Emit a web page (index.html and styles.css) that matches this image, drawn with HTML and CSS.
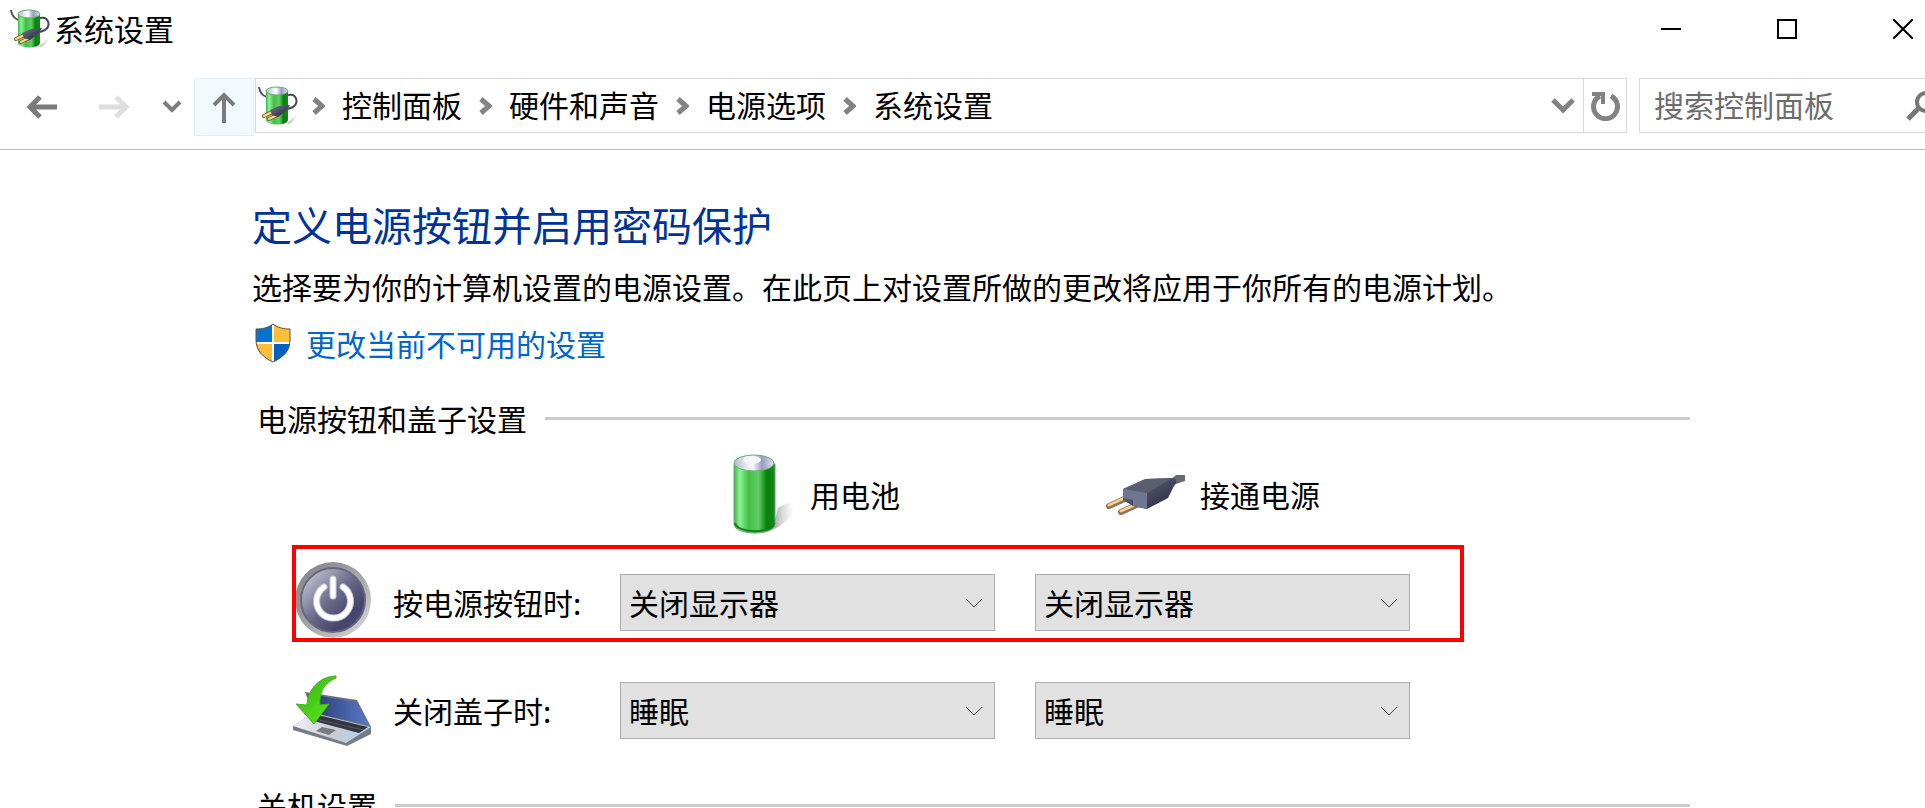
FILE: index.html
```
<!doctype html>
<html lang="zh-CN">
<head>
<meta charset="utf-8">
<title>系统设置</title>
<meta name="viewport" content="width=device-width, initial-scale=1">
<link rel="stylesheet" href="styles.css">
</head>
<body>

<!-- shared icons -->
<svg class="defs" aria-hidden="true">
  <defs>
    <linearGradient id="green">
      <stop offset="0" stop-color="#3db548"/>
      <stop offset=".14" stop-color="#8af590"/>
      <stop offset=".36" stop-color="#45bd4a"/>
      <stop offset=".6" stop-color="#5fce62"/>
      <stop offset=".8" stop-color="#087f0c"/>
      <stop offset="1" stop-color="#17891d"/>
    </linearGradient>
    <linearGradient id="cap">
      <stop offset="0" stop-color="#b4b8cd"/>
      <stop offset=".45" stop-color="#fff"/>
      <stop offset=".7" stop-color="#9a9dbd"/>
      <stop offset="1" stop-color="#e2e4f0"/>
    </linearGradient>
    <linearGradient id="shadow">
      <stop offset="0" stop-color="#777" stop-opacity=".7"/>
      <stop offset="1" stop-color="#bbb" stop-opacity="0"/>
    </linearGradient>
    <linearGradient id="plug" x1="0" y1="0" x2="1" y2="1">
      <stop offset="0" stop-color="#7b7d90"/>
      <stop offset=".5" stop-color="#474961"/>
      <stop offset="1" stop-color="#25263d"/>
    </linearGradient>
    <linearGradient id="ring" x1="0" y1="0" x2="1" y2="1">
      <stop offset="0" stop-color="#7e7f84"/>
      <stop offset=".5" stop-color="#a4a4a8"/>
      <stop offset="1" stop-color="#dcdcdc"/>
    </linearGradient>
    <linearGradient id="knob" x1="0" y1="0" x2="1" y2="1">
      <stop offset=".1" stop-color="#c2c2d0"/>
      <stop offset=".48" stop-color="#6a6a8a"/>
      <stop offset=".75" stop-color="#45446a"/>
      <stop offset="1" stop-color="#55547c"/>
    </linearGradient>
    <linearGradient id="screen">
      <stop offset="0" stop-color="#26356e"/>
      <stop offset="1" stop-color="#5a7bc8"/>
    </linearGradient>
    <linearGradient id="deck">
      <stop offset="0" stop-color="#f4f4f8"/>
      <stop offset=".5" stop-color="#c9cbd3"/>
      <stop offset="1" stop-color="#a9d4ee"/>
    </linearGradient>
    <linearGradient id="arrow" x1="0" y1="0" x2="1" y2="1">
      <stop offset="0" stop-color="#2fae12"/>
      <stop offset="1" stop-color="#63ee1c"/>
    </linearGradient>
  </defs>
  <symbol id="power-icon" viewBox="0 0 40 40">
    <path d="M29 38 39 27q1 6-6 10z" fill="url(#shadow)"/>
    <path d="M1 1q1 8 8 10" fill="none" stroke="#50526e" stroke-width="2"/>
    <path d="M8 5v29c0 6 22 6 22 0V5z" fill="url(#green)"/>
    <ellipse cx="19" cy="5" rx="11" ry="4" fill="url(#cap)" stroke="#5dad70"/>
    <path d="M30 9c9-2 11 8 5 12l-5 2" fill="none" stroke="#46475f" stroke-width="2"/>
    <path d="m6 30 8-4M11 33l8-4" stroke="#8b5a26" stroke-width="4" stroke-linecap="round"/>
    <path d="m6 30 8-4M11 33l8-4" stroke="#ffd49a" stroke-width="2" stroke-linecap="round"/>
    <path d="m12 24 9-4 11-1-3 5-9 7-6-2z" fill="url(#plug)"/>
  </symbol>
  <symbol id="crumb" viewBox="0 0 13 18">
    <path d="m2 2 8 7-8 7" fill="none" stroke="#838383" stroke-width="5"/>
  </symbol>
  <symbol id="drop" viewBox="0 0 18 10">
    <path d="m1 1 8 8 8-8" fill="none" stroke="#444"/>
  </symbol>
</svg>

<div class="window">
  <header class="titlebar">
    <svg class="app-icon"><use href="#power-icon"/></svg>
    <span class="caption">系统设置</span>
    <button class="win-btn" aria-label="最小化"><svg width="20" height="20"><path d="M0 10h20" stroke="#000" stroke-width="2"/></svg></button>
    <button class="win-btn" aria-label="最大化"><svg width="20" height="20"><path d="M1 1h18v18H1z" fill="none" stroke="#000" stroke-width="2"/></svg></button>
    <button class="win-btn close" aria-label="关闭"><svg width="20" height="20"><path d="m0 0 20 20M20 0 0 20" stroke="#000" stroke-width="2"/></svg></button>
  </header>

  <nav class="toolbar">
    <button class="nav-btn" aria-label="后退"><svg width="30" height="24"><path d="M30 12H3M13 2 3 12l10 10" fill="none" stroke="#7b7b7b" stroke-width="5"/></svg></button>
    <button class="nav-btn" aria-label="前进" disabled><svg width="30" height="24"><path d="M0 12h27M17 2l10 10-10 10" fill="none" stroke="#dedede" stroke-width="5"/></svg></button>
    <button class="nav-btn recent" aria-label="最近浏览的位置"><svg width="20" height="14"><path d="m2 2 8 8 8-8" fill="none" stroke="#7b7b7b" stroke-width="4"/></svg></button>
    <button class="nav-btn up" aria-label="上移"><svg width="24" height="32"><path d="M12 32V4M2 14 12 4l10 10" fill="none" stroke="#7b7b7b" stroke-width="4"/></svg></button>

    <div class="address">
      <svg class="app-icon"><use href="#power-icon"/></svg>
      <svg class="sep"><use href="#crumb"/></svg>
      <a href="#">控制面板</a>
      <svg class="sep"><use href="#crumb"/></svg>
      <a href="#">硬件和声音</a>
      <svg class="sep"><use href="#crumb"/></svg>
      <a href="#">电源选项</a>
      <svg class="sep"><use href="#crumb"/></svg>
      <a href="#">系统设置</a>
      <button class="history" aria-label="以前的位置"><svg width="24" height="16"><path d="m2 2 10 10L22 2" fill="none" stroke="#838383" stroke-width="5"/></svg></button>
      <button class="refresh" aria-label="刷新"><svg width="30" height="30" fill="none" stroke="#838383"><path d="M21 5a12 12 0 1 1-11 0" stroke-width="5"/><path d="M2 3h11v10" stroke-width="4"/></svg></button>
    </div>

    <div class="search">
      <input type="text" placeholder="搜索控制面板" aria-label="搜索控制面板">
      <svg width="32" height="30" fill="none" stroke="#777"><circle cx="20" cy="11" r="9" stroke-width="4"/><path d="M13 17 2 28" stroke-width="5"/></svg>
    </div>
  </nav>

  <main>
    <h1>定义电源按钮并启用密码保护</h1>
    <p>选择要为你的计算机设置的电源设置。在此页上对设置所做的更改将应用于你所有的电源计划。</p>
    <a class="elevate" href="#">
      <svg width="38" height="40" viewBox="0 0 38 40">
        <path d="M19 1C14 5 8 6 2 6v13h17z" fill="#0872cf"/>
        <path d="M19 1c5 4 11 5 17 5v13H19z" fill="#ffbd38"/>
        <path d="M2 19c0 10 8 16 17 20V19z" fill="#ffbd38"/>
        <path d="M36 19c0 10-8 16-17 20V19z" fill="#0560c4"/>
        <path d="M19 1v38M2 20h34" stroke="#fff" stroke-width="2"/>
        <path d="M19 1C14 5 8 6 2 6v11c0 11 8 18 17 22 9-4 17-11 17-22V6c-6 0-12-1-17-5z" fill="none" stroke="#555"/>
      </svg>
      更改当前不可用的设置
    </a>

    <section>
      <h2>电源按钮和盖子设置</h2>

      <div class="row">
        <div class="source battery">
          <svg width="80" height="80" viewBox="0 0 80 80">
            <path d="M56 76 62 54q10-7 16-3 1 9-9 17-6 5-13 8z" fill="url(#shadow)"/>
            <path d="M18 10v60c0 12 41 12 41 0V10z" fill="url(#green)" stroke="#67a96c"/>
            <path d="M19 69c3 11 36 11 39 0" fill="none" stroke="#197b20" stroke-width="2"/>
            <ellipse cx="38" cy="9" rx="20" ry="8" fill="url(#cap)" stroke="#62b56a"/>
            <ellipse cx="36" cy="6" rx="9" ry="4" fill="#f5f6fa"/>
          </svg>
          用电池
        </div>
        <div class="source mains">
          <svg width="80" height="80" viewBox="0 0 80 80">
            <path d="m3 52 20-9M15 58l20-9" stroke="#95704a" stroke-width="6" stroke-linecap="round"/>
            <path d="m3 51 20-9M15 57l20-9" stroke="#f1cf9f" stroke-width="3" stroke-linecap="round"/>
            <path d="m64 26 6-5h9v6l-9 3z" fill="#686c70"/>
            <path d="m17 35 24-10 27-1q5 3 0 8l-6 12-21 11-14-3-10-6z" fill="url(#plug)"/>
            <path d="m17 35 22-10 27-1-25 15z" fill="#5b5d70"/>
            <path d="m17 35 24 4v16l-14-3v-6l-10-2z" fill="#707590"/>
          </svg>
          接通电源
        </div>
      </div>

      <div class="row marked">
        <svg width="80" height="80" viewBox="0 0 80 80">
          <circle cx="40" cy="38" r="38" fill="url(#ring)"/>
          <circle cx="40" cy="38" r="32" fill="url(#knob)" stroke="#66677f" stroke-width="2"/>
          <path d="M31 25a17 17 0 1 0 19 0M40 17v17" fill="none" stroke="#c5c5df" stroke-width="7" stroke-linecap="round"/>
          <path d="M31 25a17 17 0 1 0 19 0M40 17v17" fill="none" stroke="#fff" stroke-width="5" stroke-linecap="round"/>
        </svg>
        <span class="label" id="press">按电源按钮时:</span>
        <div class="select">
          <select aria-labelledby="press"><option>关闭显示器</option></select>
          <svg><use href="#drop"/></svg>
        </div>
        <div class="select">
          <select aria-labelledby="press"><option>关闭显示器</option></select>
          <svg><use href="#drop"/></svg>
        </div>
      </div>

      <div class="row">
        <svg width="80" height="80" viewBox="0 0 80 80">
          <path d="m12 22 52 8 14 27-57-12z" fill="#6c6e7c"/>
          <path d="m15 24 48 8 13 23-52-11z" fill="url(#screen)"/>
          <path d="m20 43 58 13v8L54 76 0 60v-4z" fill="#777b83"/>
          <path d="m20 43 58 14-25 16L0 56z" fill="url(#deck)"/>
          <path d="m25 45 50 12-9 6-49-13z" fill="#34353f"/>
          <path d="m22 49 48 11" stroke="#555763"/>
          <path d="m29 57 14 3-7 5-13-4z" fill="#777a80"/>
          <path d="M43 6C28 6 15 18 14 35L3 34l18 20 15-20-9 1C26 22 31 13 43 8z" fill="url(#arrow)" stroke="#4cae27"/>
        </svg>
        <span class="label" id="lid">关闭盖子时:</span>
        <div class="select">
          <select aria-labelledby="lid"><option>睡眠</option></select>
          <svg><use href="#drop"/></svg>
        </div>
        <div class="select">
          <select aria-labelledby="lid"><option>睡眠</option></select>
          <svg><use href="#drop"/></svg>
        </div>
      </div>
    </section>

    <section>
      <h2>关机设置</h2>
    </section>
  </main>
</div>

</body>
</html>
```
FILE: styles.css
```
*{box-sizing:border-box;}
body{margin:0;background:#fff;color:#000;font-family:"Noto Sans CJK SC",sans-serif;font-size:30px;line-height:40px;}
button,input,select{font:inherit;color:inherit;}
button{display:flex;align-items:center;justify-content:center;padding:0;border:0;background:none;}
svg{display:block;flex:none;}
a{color:inherit;text-decoration:none;}
.defs{position:absolute;width:0;height:0;}
.window{height:100vh;overflow:hidden;}
.app-icon{width:40px;height:40px;}

/* title bar */
.titlebar{display:flex;align-items:center;height:58px;padding-left:10px;}
.caption{flex:1;margin-left:4px;padding-bottom:2px;}
.win-btn{width:116px;height:58px;}
.win-btn.close{width:80px;padding-left:36px;}

/* navigation */
.toolbar{display:flex;height:92px;padding-top:20px;border-bottom:1px solid #bfbfbf;}
.nav-btn{width:72px;height:58px;}
.nav-btn:first-child{margin-left:6px;}
.nav-btn.recent{width:44px;}
.nav-btn.up{width:60px;background:#f2f9ff;border:1px solid #dcefff;}
.address{flex:1;display:flex;align-items:center;height:55px;margin-left:1px;padding-left:2px;border:1px solid #d9d9d9;}
.address a{padding-bottom:4px;}
.sep{width:13px;height:18px;margin:0 17px;}
.app-icon + .sep{margin-left:14px;}
.history{width:40px;height:53px;margin-left:auto;}
.refresh{width:43px;height:53px;border-left:1px solid #d9d9d9;}
.search{display:flex;align-items:center;width:286px;height:55px;margin-left:12px;padding-left:14px;border:1px solid #d9d9d9;border-right:0;overflow:hidden;}
.search input{flex:none;width:252px;padding:0 0 3px;border:0;outline:0;background:none;}
.search input::placeholder{color:#6d6d6d;opacity:1;}

/* content */
main{max-width:1690px;padding:46px 0 0 252px;}
h1{margin:0;font-size:40px;font-weight:400;line-height:56px;color:#003399;}
p{margin:14px 0 17px;}
.elevate{display:inline-flex;align-items:center;gap:14px;padding-left:2px;color:#0066cc;vertical-align:top;}
section{margin-top:35px;}
h2{display:flex;align-items:center;gap:18px;margin:0 0 16px;padding-left:5px;font-size:30px;font-weight:400;}
h2::after{content:"";flex:1;height:3px;background:#cbcbcb;}

.row{position:relative;display:grid;grid-template-columns:100px 227px 375px 375px;align-items:center;width:1118px;height:80px;margin:0 0 28px 41px;}
.select + .select,.mains{margin-left:40px;}
.row .select,.row .source{width:375px;}
.source{display:flex;align-items:center;gap:14px;}
.battery{grid-column:3;padding-left:96px;}
.mains{padding-left:71px;}
.select{position:relative;}
.select select{display:block;width:100%;height:57px;padding:0 8px;border:1px solid #adadad;border-radius:0;background:#e1e1e1;appearance:none;}
.select svg{position:absolute;top:24px;right:12px;width:18px;height:10px;pointer-events:none;}

/* red frame over the power button row */
.marked::after{content:"";position:absolute;inset:-17px -53px 0 -1px;border:4px solid #f00;pointer-events:none;}
```
